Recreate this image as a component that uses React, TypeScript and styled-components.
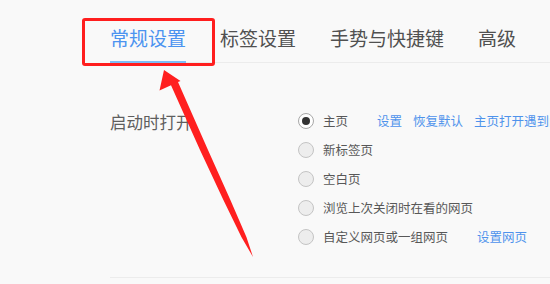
import React, { useState } from "react";
import styled, { createGlobalStyle, css } from "styled-components";

const GlobalStyle = createGlobalStyle`
  html, body {
    margin: 0;
    padding: 0;
    background: #f9f9f9;
  }
  body {
    font-family: "Noto Sans CJK SC", "Noto Sans", sans-serif;
  }
`;

const tabs = ["常规设置", "标签设置", "手势与快捷键", "高级"];

interface IOption {
  label: string;
  links?: string[];
}

const options: IOption[] = [
  { label: "主页", links: ["设置", "恢复默认", "主页打开遇到问题？"] },
  { label: "新标签页" },
  { label: "空白页" },
  { label: "浏览上次关闭时在看的网页" },
  { label: "自定义网页或一组网页", links: ["设置网页"] },
];

function App() {
  const [activeTab, setActiveTab] = useState<number>(0);
  const [selected, setSelected] = useState<number>(0);

  return (
    <StyledPage>
      <GlobalStyle />
      <StyledTabBar>
        {tabs.map((tab, i) => (
          <StyledTab
            key={tab}
            active={i === activeTab}
            onClick={() => setActiveTab(i)}
          >
            {tab}
          </StyledTab>
        ))}
      </StyledTabBar>

      <StyledSection>
        <StyledSectionTitle>启动时打开</StyledSectionTitle>
        <StyledOptionList>
          {options.map((opt, i) => (
            <StyledOption key={opt.label} onClick={() => setSelected(i)}>
              <StyledRadio checked={i === selected} />
              <StyledOptionLabel>{opt.label}</StyledOptionLabel>
              {opt.links && (
                <StyledLinks>
                  {opt.links.map((link) => (
                    <StyledLink key={link}>{link}</StyledLink>
                  ))}
                </StyledLinks>
              )}
            </StyledOption>
          ))}
        </StyledOptionList>
      </StyledSection>

      {/* annotation drawn on top of the screenshot */}
      <StyledHighlight />
      <StyledArrow width="550" height="284" viewBox="0 0 550 284">
        <polygon
          fill="#ff1f1f"
          points="164,70 180.5,81 178,82.1 208,150 230.4,200 246.4,237 253,257 241.4,237 223.4,200 200,150 171,85.3 159.5,90.5"
        />
      </StyledArrow>
    </StyledPage>
  );
}

export default App;

const StyledPage = styled.div`
  position: relative;
  width: 550px;
  height: 284px;
  overflow: hidden;
  padding-left: 110px;
  box-sizing: border-box;
  background: #f9f9f9;
`;

const StyledTabBar = styled.div`
  display: flex;
  padding-top: 27px;
  border-bottom: 1px solid #ececec;
`;

const StyledTab = styled.div<{ active: boolean }>`
  font-size: 19px;
  line-height: 22px;
  padding-bottom: 12px;
  margin-right: 34px;
  margin-bottom: -1px;
  color: #505050;
  white-space: nowrap;
  cursor: pointer;
  border-bottom: 2px solid transparent;
  ${({ active }) =>
    active &&
    css`
      color: #4b93f0;
      border-bottom-color: #7dbdf6;
    `}
`;

const StyledSection = styled.div`
  display: flex;
  margin-top: 43px;
  padding-bottom: 26px;
  border-bottom: 1px solid #ececec;
`;

const StyledSectionTitle = styled.div`
  width: 188px;
  flex-shrink: 0;
  font-size: 16.5px;
  line-height: 29px;
  padding-top: 2px;
  color: #5e5e5e;
`;

const StyledOptionList = styled.div`
  display: flex;
  flex-direction: column;
  min-width: 0;
`;

const StyledOption = styled.div`
  display: flex;
  align-items: center;
  height: 29px;
  white-space: nowrap;
  cursor: pointer;
`;

const StyledRadio = styled.span<{ checked: boolean }>`
  position: relative;
  width: 14px;
  height: 14px;
  border-radius: 50%;
  border: 1px solid #c4c4c4;
  background: #ededed;
  flex-shrink: 0;
  ${({ checked }) =>
    checked &&
    css`
      background: #fff;
      border-color: #a8a8a8;
      &::after {
        content: "";
        position: absolute;
        left: 3px;
        top: 3px;
        width: 8px;
        height: 8px;
        border-radius: 50%;
        background: #333;
      }
    `}
`;

const StyledOptionLabel = styled.span`
  margin-left: 9px;
  font-size: 12.5px;
  color: #585858;
`;

const StyledLinks = styled.span`
  display: flex;
  gap: 11px;
  margin-left: 29px;
`;

const StyledLink = styled.span`
  font-size: 12.5px;
  color: #4f93ec;
`;

const StyledHighlight = styled.div`
  position: absolute;
  left: 82px;
  top: 18px;
  width: 133px;
  height: 48px;
  box-sizing: border-box;
  border: 3px solid #ff1e1e;
  border-radius: 3px;
  pointer-events: none;
`;

const StyledArrow = styled.svg`
  position: absolute;
  left: 0;
  top: 0;
  pointer-events: none;
`;
